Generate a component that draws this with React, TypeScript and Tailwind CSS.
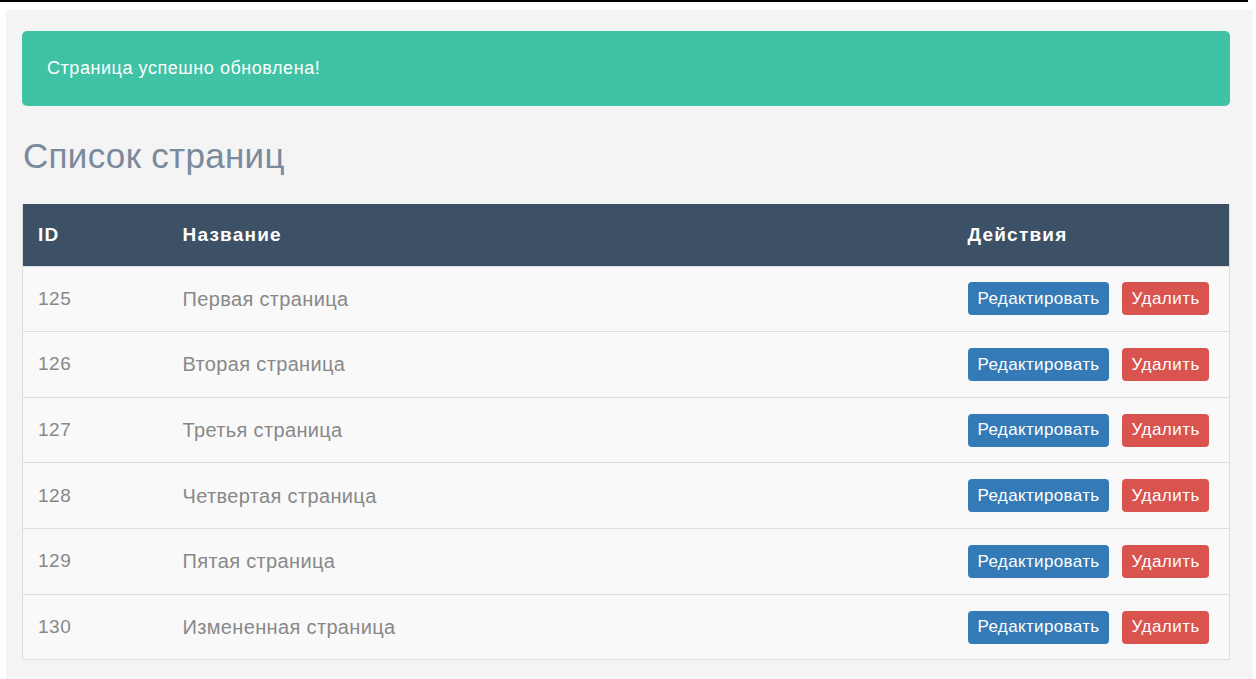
import React from "react";

interface PageItem {
  id: number;
  title: string;
}

const pages: PageItem[] = [
  { id: 125, title: "Первая страница" },
  { id: 126, title: "Вторая страница" },
  { id: 127, title: "Третья страница" },
  { id: 128, title: "Четвертая страница" },
  { id: 129, title: "Пятая страница" },
  { id: 130, title: "Измененная страница" },
];

function PageRow({ page }: { page: PageItem }) {
  return (
    <tr className="h-[65.67px] border-t border-[#dddddd] bg-[#f9f9f9]">
      <td className="pl-[15px] text-[19px] tracking-[0.5px] text-[#888888]">{page.id}</td>
      <td className="text-[20px] tracking-[0.35px] text-[#888888]">{page.title}</td>
      <td>
        <div className="flex items-center gap-[13px]">
          <button className="h-[33px] rounded-[4px] bg-[#337ab7] px-[10px] text-[17px] tracking-[0.35px] text-white">
            Редактировать
          </button>
          <button className="h-[33px] rounded-[4px] bg-[#d9534f] px-[9px] text-[17px] tracking-[0.5px] text-white">
            Удалить
          </button>
        </div>
      </td>
    </tr>
  );
}

export default function App() {
  return (
    <div className="min-h-[679px] bg-white font-['Liberation_Sans',Arial,sans-serif]">
      {/* top rule */}
      <div className="h-[2px] w-[1248px] bg-black" />
      <div className="ml-[6px] mt-[8px] min-h-[669px] w-[1247px] bg-[#f4f4f4] pl-[16px] pt-[21px]">
        <div className="flex h-[75px] w-[1208px] items-center rounded-[5px] bg-[#40c2a4] pl-[25px] text-[18px] tracking-[0.55px] text-white">
          Страница успешно обновлена!
        </div>

        <h1 className="mt-[30px] pl-[1px] text-[35px] leading-[40px] tracking-[0.3px] text-[#7b8a9c]">Список страниц</h1>

        <table className="mt-[28px] w-[1208px] border-collapse border-x border-b border-[#dddddd] text-left">
          <thead>
            <tr className="h-[62px] bg-[#3d5166] text-[19px] font-bold tracking-[1.2px] text-white">
              <th className="w-[160px] pl-[15px]">ID</th>
              <th className="w-[785px]">Название</th>
              <th>Действия</th>
            </tr>
          </thead>
          <tbody>
            {pages.map((p) => (
              <PageRow key={p.id} page={p} />
            ))}
          </tbody>
        </table>
      </div>
    </div>
  );
}
